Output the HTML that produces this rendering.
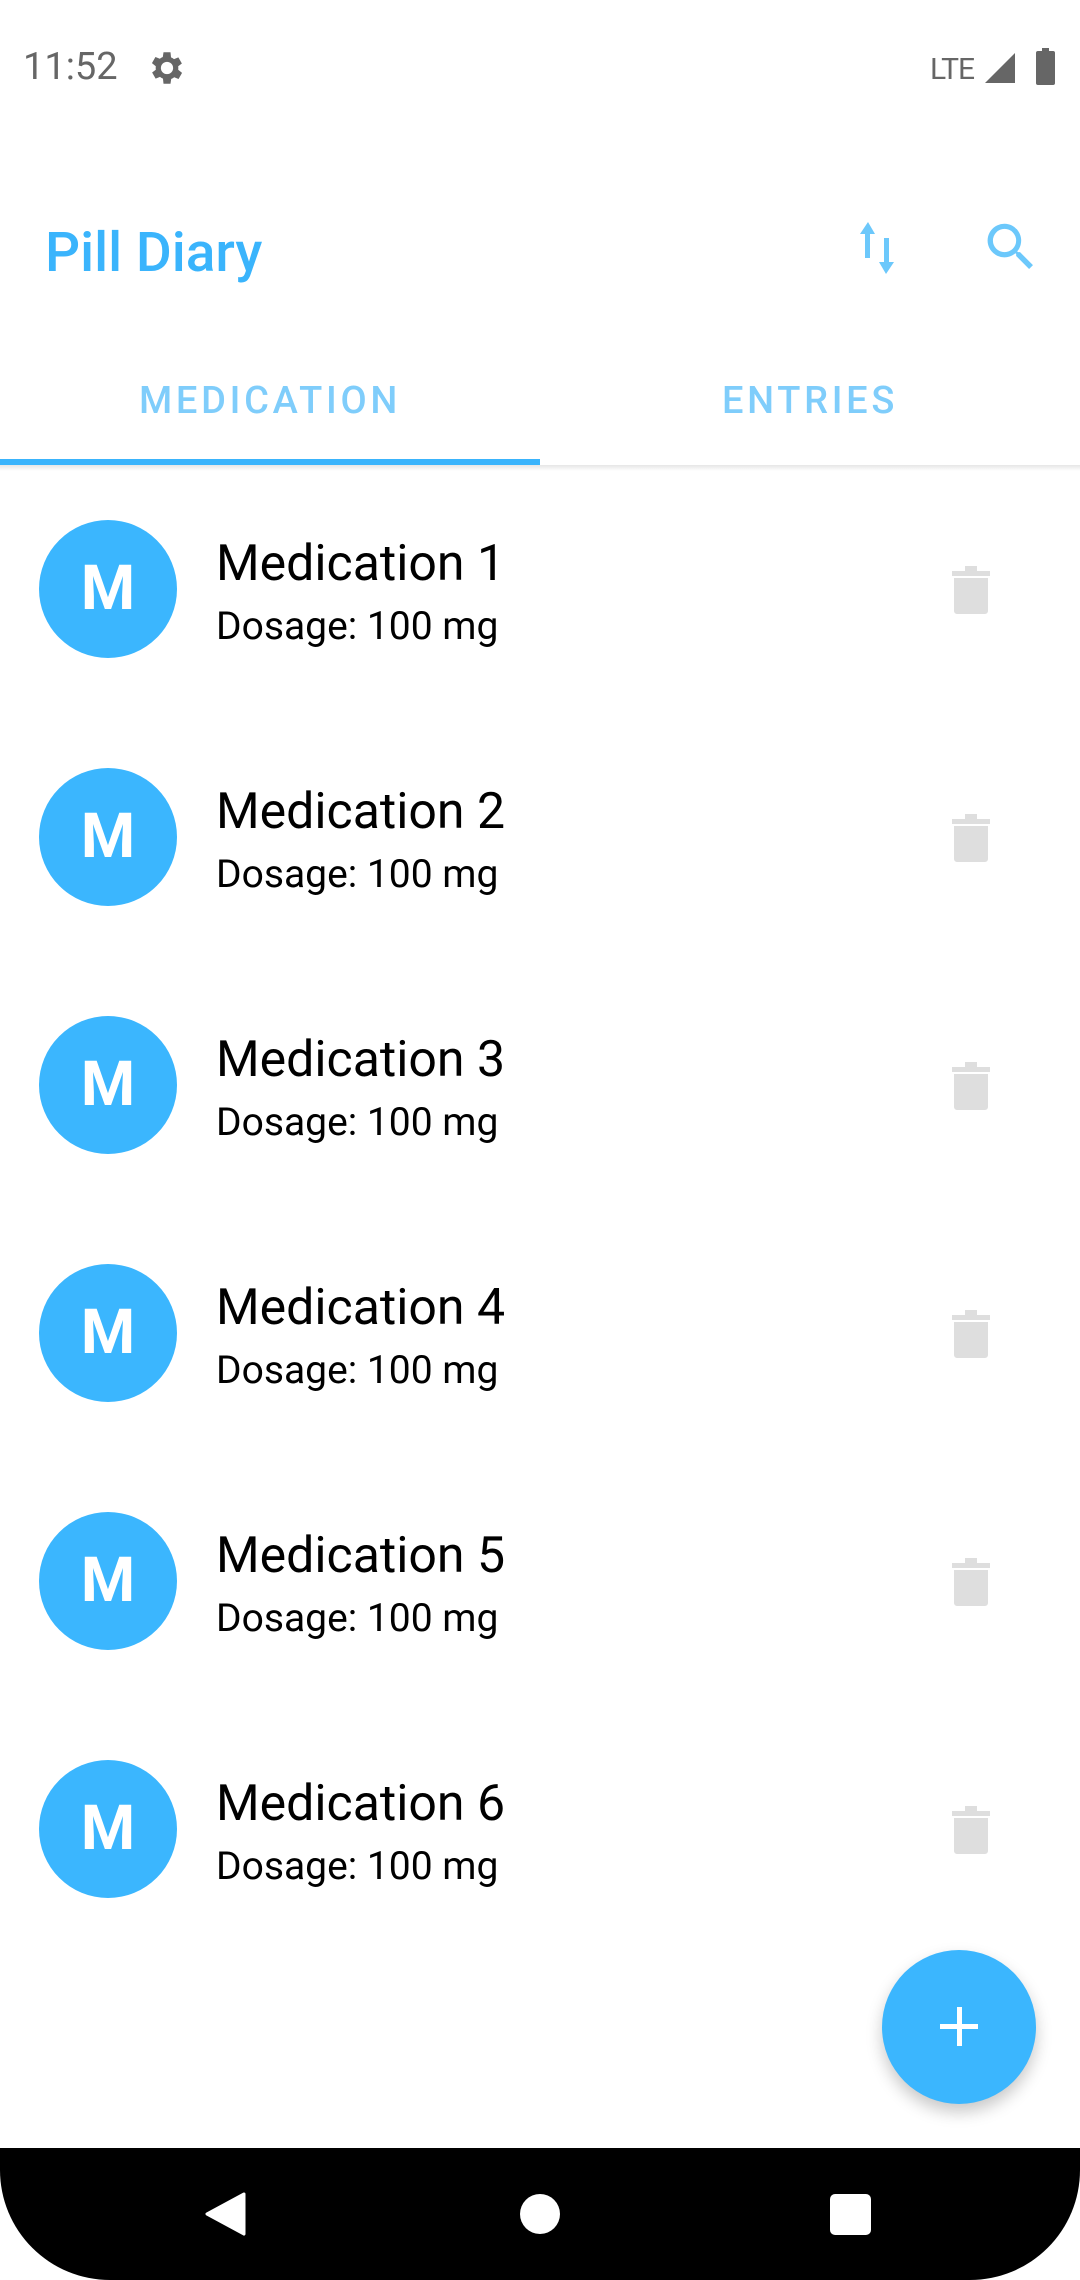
<!DOCTYPE html>
<html><head><meta charset="utf-8"><style>
*{margin:0;padding:0;box-sizing:border-box}
body{width:1080px;height:2280px;background:#fff;position:relative;overflow:hidden;font-family:"Roboto","Liberation Sans",sans-serif}
.abs{position:absolute}
.time{left:23px;top:45px;font-size:38px;color:#666}
.title{left:45px;top:221px;font-size:55px;color:#3ab4fc;font-weight:500}
.tab{top:379px;font-size:38px;letter-spacing:3.7px;color:#7fcdfb;font-weight:500}
.row{position:absolute;left:0;width:1080px;height:248px}
.av{position:absolute;left:39px;width:138px;height:138px;border-radius:50%;background:#3bb6fe;color:#fff;font-size:62px;font-weight:bold;text-align:center;line-height:138px}
.n{position:absolute;left:216px;font-size:50px;color:#000}
.d{position:absolute;left:216px;font-size:39px;color:#000}
.tr{position:absolute;left:952px}
</style></head><body>
<div class="abs time">11:52</div>
<svg class="abs" style="left:146px;top:47px" width="42" height="42" viewBox="0 0 24 24"><path fill="#666" d="M19.4 13a7.5 7.5 0 0 0 0-2l2.1-1.6-2-3.5-2.5 1a7 7 0 0 0-1.7-1L15 3h-4l-.4 2.7a7 7 0 0 0-1.7 1l-2.5-1-2 3.5L6.6 11a7.5 7.5 0 0 0 0 2l-2.1 1.6 2 3.5 2.5-1a7 7 0 0 0 1.7 1L11 21h4l.4-2.7a7 7 0 0 0 1.7-1l2.5 1 2-3.5zM13 15.5a3.5 3.5 0 1 1 0-7 3.5 3.5 0 0 1 0 7z" transform="translate(-1 0)"/></svg>
<div class="abs" style="left:930px;top:52px;font-size:30px;color:#666;letter-spacing:-1px">LTE</div>
<svg class="abs" style="left:982px;top:50px" width="36" height="36" viewBox="0 0 24 24"><path fill="#666" d="M2 22L22 2v20z"/></svg>
<div class="abs" style="left:1036px;top:51px;width:19px;height:34px;background:#666;border-radius:2px"></div>
<div class="abs" style="left:1042px;top:48px;width:7px;height:4px;background:#666"></div>
<div class="abs title">Pill Diary</div>
<svg class="abs" style="left:857px;top:222px" width="40" height="52" viewBox="0 0 40 52"><path fill="#6cc8fb" d="M11 0L3 12h5v24h5V12h5zM29 52l8-12h-5V16h-5v24h-5z"/></svg>
<svg class="abs" style="left:980px;top:216px" width="62" height="62" viewBox="0 0 24 24"><path fill="#6cc8fb" d="M15.5 14h-.8l-.3-.3A6.5 6.5 0 1 0 9.5 16a6.5 6.5 0 0 0 4.2-1.6l.3.3v.8l5 5 1.5-1.5-5-5zm-6 0a4.5 4.5 0 1 1 0-9 4.5 4.5 0 0 1 0 9z"/></svg>
<div class="abs tab" style="left:0;width:540px;text-align:center">MEDICATION</div>
<div class="abs tab" style="left:540px;width:540px;text-align:center">ENTRIES</div>
<div class="abs" style="left:0;top:459px;width:540px;height:6px;background:#3ab4fc"></div>
<div class="abs" style="left:0;top:465px;width:1080px;height:6px;background:linear-gradient(#e6e6e6,#fff)"></div>

<div class="row" style="top:465px"><div class="av" style="top:55px">M</div><div class="n" style="top:70px">Medication 1</div><div class="d" style="top:138px">Dosage: 100 mg</div><svg class="tr" style="top:99px" width="38" height="50" viewBox="0 0 38 50"><path fill="#dedede" d="M0 7h38v5H0zM13 2h12v6H13zM2 14h34v33a3 3 0 0 1-3 3H5a3 3 0 0 1-3-3z"/></svg></div>
<div class="row" style="top:713px"><div class="av" style="top:55px">M</div><div class="n" style="top:70px">Medication 2</div><div class="d" style="top:138px">Dosage: 100 mg</div><svg class="tr" style="top:99px" width="38" height="50" viewBox="0 0 38 50"><path fill="#dedede" d="M0 7h38v5H0zM13 2h12v6H13zM2 14h34v33a3 3 0 0 1-3 3H5a3 3 0 0 1-3-3z"/></svg></div>
<div class="row" style="top:961px"><div class="av" style="top:55px">M</div><div class="n" style="top:70px">Medication 3</div><div class="d" style="top:138px">Dosage: 100 mg</div><svg class="tr" style="top:99px" width="38" height="50" viewBox="0 0 38 50"><path fill="#dedede" d="M0 7h38v5H0zM13 2h12v6H13zM2 14h34v33a3 3 0 0 1-3 3H5a3 3 0 0 1-3-3z"/></svg></div>
<div class="row" style="top:1209px"><div class="av" style="top:55px">M</div><div class="n" style="top:70px">Medication 4</div><div class="d" style="top:138px">Dosage: 100 mg</div><svg class="tr" style="top:99px" width="38" height="50" viewBox="0 0 38 50"><path fill="#dedede" d="M0 7h38v5H0zM13 2h12v6H13zM2 14h34v33a3 3 0 0 1-3 3H5a3 3 0 0 1-3-3z"/></svg></div>
<div class="row" style="top:1457px"><div class="av" style="top:55px">M</div><div class="n" style="top:70px">Medication 5</div><div class="d" style="top:138px">Dosage: 100 mg</div><svg class="tr" style="top:99px" width="38" height="50" viewBox="0 0 38 50"><path fill="#dedede" d="M0 7h38v5H0zM13 2h12v6H13zM2 14h34v33a3 3 0 0 1-3 3H5a3 3 0 0 1-3-3z"/></svg></div>
<div class="row" style="top:1705px"><div class="av" style="top:55px">M</div><div class="n" style="top:70px">Medication 6</div><div class="d" style="top:138px">Dosage: 100 mg</div><svg class="tr" style="top:99px" width="38" height="50" viewBox="0 0 38 50"><path fill="#dedede" d="M0 7h38v5H0zM13 2h12v6H13zM2 14h34v33a3 3 0 0 1-3 3H5a3 3 0 0 1-3-3z"/></svg></div>

<div class="abs" style="left:882px;top:1950px;width:154px;height:154px;border-radius:50%;background:#3bb6fe;box-shadow:0 8px 16px rgba(0,0,0,0.22)"></div>
<div class="abs" style="left:940px;top:2024px;width:38px;height:5px;background:#fff"></div>
<div class="abs" style="left:957px;top:2007px;width:5px;height:39px;background:#fff"></div>

<div class="abs" style="left:0;top:2148px;width:1080px;height:132px;background:#000;border-radius:0 0 110px 110px"></div>
<svg class="abs" style="left:204px;top:2192px" width="42" height="44" viewBox="0 0 42 44"><path fill="#fff" d="M40 2L3 22l37 20z" stroke="#fff" stroke-width="3" stroke-linejoin="round"/></svg>
<div class="abs" style="left:520px;top:2194px;width:40px;height:40px;border-radius:50%;background:#fff"></div>
<div class="abs" style="left:830px;top:2194px;width:41px;height:41px;border-radius:5px;background:#fff"></div>
</body></html>
